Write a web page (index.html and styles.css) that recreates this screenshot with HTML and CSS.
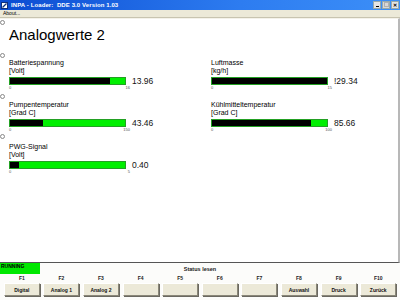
FILE: index.html
```html
<!DOCTYPE html>
<html lang="de">
<head>
  <meta charset="UTF-8">
  <title>INPA - Loader: DDE 3.0 Version 1.03</title>
  <link rel="stylesheet" href="styles.css">
</head>
<body>
  <div class="window">
    <div class="titlebar">
      <svg class="appicon" width="7" height="7" viewBox="0 0 7 7">
        <rect x="0.5" y="0.5" width="6" height="6" fill="#fff" stroke="#12307a"/>
        <path d="M1.5 5.5 L5.5 1.5" stroke="#12307a" stroke-width="1.2"/>
      </svg>
      <span class="title">INPA - Loader:&nbsp; DDE 3.0 Version 1.03</span>
      <div class="controls">
        <span class="ctl"><i class="min"></i></span>
        <span class="ctl off"><i class="max"></i></span>
        <span class="ctl close">&#x2715;</span>
      </div>
    </div>
    <div class="menubar"><span>About...</span></div>

    <div class="content">
      <span class="dot" style="top:1px"></span>
      <span class="dot" style="top:34px"></span>
      <span class="dot" style="top:75px"></span>
      <span class="dot" style="top:115px"></span>

      <h1>Analogwerte 2</h1>

      <div class="grid">
        <div class="item">
          <div class="label">Batteriespannung</div>
          <div class="unit">[Volt]</div>
          <div class="barrow">
            <div class="bar"><div class="fill" style="width:87%"></div></div>
            <span class="value">13.96</span>
          </div>
          <div class="scale"><span>0</span><span>16</span></div>
        </div>
        <div class="item">
          <div class="label">Luftmasse</div>
          <div class="unit">[kg/h]</div>
          <div class="barrow">
            <div class="bar"><div class="fill" style="width:100%"></div></div>
            <span class="value">!29.34</span>
          </div>
          <div class="scale"><span>0</span><span>15</span></div>
        </div>
        <div class="item">
          <div class="label">Pumpentemperatur</div>
          <div class="unit">[Grad C]</div>
          <div class="barrow">
            <div class="bar"><div class="fill" style="width:29%"></div></div>
            <span class="value">43.46</span>
          </div>
          <div class="scale"><span>0</span><span>150</span></div>
        </div>
        <div class="item">
          <div class="label">Kühlmitteltemperatur</div>
          <div class="unit">[Grad C]</div>
          <div class="barrow">
            <div class="bar"><div class="fill" style="width:85.66%"></div></div>
            <span class="value">85.66</span>
          </div>
          <div class="scale"><span>0</span><span>100</span></div>
        </div>
        <div class="item">
          <div class="label">PWG-Signal</div>
          <div class="unit">[Volt]</div>
          <div class="barrow">
            <div class="bar"><div class="fill" style="width:8%"></div></div>
            <span class="value">0.40</span>
          </div>
          <div class="scale"><span>0</span><span>5</span></div>
        </div>
      </div>
    </div>

    <div class="status">
      <div class="statusline">
        <span class="running">RUNNING</span>
        <span class="statustext">Status lesen</span>
      </div>
      <div class="fkeys">
        <div class="fkey"><span>F1</span><button>Digital</button></div>
        <div class="fkey"><span>F2</span><button>Analog 1</button></div>
        <div class="fkey"><span>F3</span><button>Analog 2</button></div>
        <div class="fkey"><span>F4</span><button></button></div>
        <div class="fkey"><span>F5</span><button></button></div>
        <div class="fkey"><span>F6</span><button></button></div>
        <div class="fkey"><span>F7</span><button></button></div>
        <div class="fkey"><span>F8</span><button>Auswahl</button></div>
        <div class="fkey"><span>F9</span><button>Druck</button></div>
        <div class="fkey"><span>F10</span><button>Zurück</button></div>
      </div>
    </div>
  </div>
</body>
</html>
```

FILE: styles.css
```css
body {
  margin: 0;
  font-family: "Liberation Sans", Arial, sans-serif;
  background: #fff;
}
.window {
  width: 400px;
  height: 300px;
  display: flex;
  flex-direction: column;
  overflow: hidden;
}
.titlebar {
  height: 10px;
  display: flex;
  align-items: center;
  padding: 0 1px;
  background: linear-gradient(to right, #0b4cd2, #2d7cf0 60%, #3c8ff8);
  color: #fff;
}
.appicon {
  margin-right: 3px;
}
.title {
  font-size: 6px;
  font-weight: bold;
  letter-spacing: 0.1px;
}
.controls {
  margin-left: auto;
  display: flex;
  gap: 1px;
}
.ctl {
  width: 6px;
  height: 6px;
  background: #e4e4e4;
  border: 1px solid #9aa;
  display: flex;
  align-items: flex-end;
  justify-content: center;
  font-size: 5px;
  line-height: 6px;
  color: #000;
}
.ctl.off {
  background: #d8d8d8;
}
.ctl.close {
  align-items: center;
  font-weight: bold;
}
.min {
  width: 3px;
  height: 1px;
  background: #000;
  margin-bottom: 1px;
}
.max {
  width: 3px;
  height: 3px;
  border: 1px solid #b0b0b0;
  margin-bottom: 1px;
}
.menubar {
  height: 7px;
  background: #ece9d8;
  border-bottom: 1px solid #c8c4b0;
  font-size: 5px;
  line-height: 7px;
  padding-left: 3px;
  color: #000;
}
.content {
  position: relative;
  flex: 1;
  background: #fff;
  border-top: 1px solid #f4f2ea;
  border-right: 2px solid #b8b8b8;
  border-bottom: 1px solid #555;
  padding-left: 9px;
}
.dot {
  position: absolute;
  left: 0;
  width: 3px;
  height: 3px;
  border: 1px solid #888;
  border-radius: 50%;
  background: #fff;
}
h1 {
  margin: 7px 0 0;
  font-size: 15px;
  font-weight: normal;
  line-height: 18px;
  color: #000;
}
.grid {
  margin-top: 15px;
  display: grid;
  grid-template-columns: 202px 180px;
  row-gap: 10px;
}
.item {
  color: #000;
}
.label,
.unit {
  font-size: 7px;
  line-height: 8px;
}
.barrow {
  margin-top: 2px;
  display: flex;
  align-items: center;
  gap: 6px;
}
.bar {
  width: 115px;
  height: 6px;
  border: 1px solid #23a023;
  background: #00ef00;
}
.fill {
  height: 100%;
  background: #000;
}
.value {
  font-size: 8.5px;
  line-height: 8px;
  color: #111;
}
.scale {
  width: 121px;
  display: flex;
  justify-content: space-between;
  font-size: 4px;
  line-height: 6px;
  color: #555;
}
.status {
  height: 37px;
  background: #fcfcfa;
}
.statusline {
  position: relative;
  height: 11px;
  display: flex;
  align-items: center;
  justify-content: center;
}
.running {
  position: absolute;
  left: 0;
  top: 0;
  width: 40px;
  height: 11px;
  background: #00e800;
  font-size: 5px;
  font-weight: bold;
  line-height: 7px;
  padding-left: 1px;
  box-sizing: border-box;
}
.statustext {
  font-size: 5.5px;
  font-weight: bold;
  color: #222;
}
.fkeys {
  display: grid;
  grid-template-columns: repeat(10, 1fr);
  padding: 0 2px;
}
.fkey {
  display: flex;
  flex-direction: column;
  align-items: center;
  font-size: 5px;
  font-weight: bold;
  color: #222;
}
.fkey span {
  line-height: 9px;
}
button {
  width: 36px;
  height: 13px;
  margin: 0;
  padding: 0;
  font-family: "Liberation Sans", Arial, sans-serif;
  font-size: 5px;
  font-weight: bold;
  color: #111;
  background: #ece9d8;
  border: 1px solid;
  border-color: #fff #8a8778 #8a8778 #fff;
  box-shadow: 1px 1px 0 #6a6860;
}
```
